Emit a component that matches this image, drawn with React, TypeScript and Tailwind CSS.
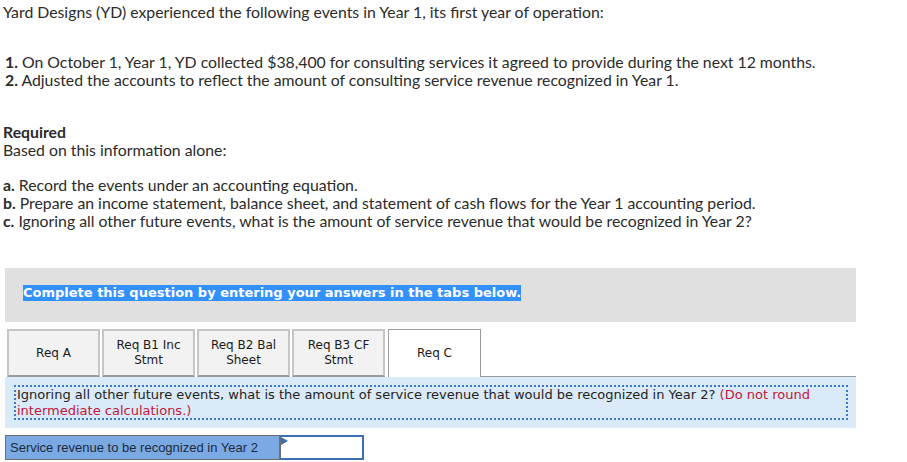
import React from 'react';

const tabs = [
    { label: ['Req A'], active: false },
    { label: ['Req B1 Inc', 'Stmt'], active: false },
    { label: ['Req B2 Bal', 'Sheet'], active: false },
    { label: ['Req B3 CF', 'Stmt'], active: false },
    { label: ['Req C'], active: true },
];

export default function App() {
    return (
        <div className="w-[907px] h-[462px] bg-white overflow-hidden text-[#2b2b2b]">
            <div className="pl-[3px] pt-[3px] font-['Lato',sans-serif] text-[15.8px] leading-[18px]">
                <p>Yard Designs (YD) experienced the following events in Year 1, its first year of operation:</p>
                <div className="mt-[32px] pl-[2px]">
                    <p><b>1.</b> On October 1, Year 1, YD collected $38,400 for consulting services it agreed to provide during the next 12 months.</p>
                    <p><b>2.</b> Adjusted the accounts to reflect the amount of consulting service revenue recognized in Year 1.</p>
                </div>
                <div className="mt-[34px]">
                    <p className="font-bold">Required</p>
                    <p>Based on this information alone:</p>
                </div>
                <div className="mt-[17px]">
                    <p><b>a.</b> Record the events under an accounting equation.</p>
                    <p><b>b.</b> Prepare an income statement, balance sheet, and statement of cash flows for the Year 1 accounting period.</p>
                    <p><b>c.</b> Ignoring all other future events, what is the amount of service revenue that would be recognized in Year 2?</p>
                </div>
            </div>

            <div className="ml-[5px] mt-[38px] w-[851px] h-[54px] bg-[#e0e0e0] pl-[18px] pt-[12px] font-['DejaVu_Sans',Verdana,sans-serif]">
                <span className="bg-[#3391ff] text-white font-bold text-[13px] leading-[16px] inline-block">
                    Complete this question by entering your answers in the tabs below.
                </span>
            </div>

            <div className="ml-[5px] mt-[7px] w-[851px] flex items-end font-['DejaVu_Sans',Verdana,sans-serif] text-[12px] leading-[15px] text-[#1a1a1a]">
                {tabs.map((t, i) => (
                    <div
                        key={i}
                        className={
                            t.active
                                ? 'ml-[3px] w-[93px] h-[48px] bg-white border border-[#9a9a9a] border-b-0 flex flex-col items-center justify-center'
                                : 'ml-[2px] w-[93px] h-[48px] bg-[#f2f2f2] border-2 border-[#c6c6c6] border-b-[#9a9a9a] flex flex-col items-center justify-center'
                        }
                    >
                        {t.label.map((l) => (
                            <span key={l}>{l}</span>
                        ))}
                    </div>
                ))}
                <div className="flex-1 h-[48px] border-b border-[#9a9a9a]" />
            </div>

            <div className="ml-[5px] w-[851px] h-[51px] bg-[#dbeaf8] pl-[9px] pr-[8px] pt-[8px] font-['DejaVu_Sans',Verdana,sans-serif] text-[13px] leading-[16px] text-[#222]">
                <div className="border-2 border-dotted border-[#3b78c6] h-[35px] pl-[1px]">
                    Ignoring all other future events, what is the amount of service revenue that would be recognized in Year 2?{' '}
                    <span className="text-[#c0163c]">(Do not round intermediate calculations.)</span>
                </div>
            </div>

            <div className="ml-[5px] mt-[7px] flex h-[25px] font-['Liberation_Sans',Arial,sans-serif] text-[13px]">
                <div className="w-[275px] bg-[#7aa9e4] border border-[#6e6e6e] flex items-center pl-[4px] text-[#1e2a3a]">
                    Service revenue to be recognized in Year 2
                </div>
                <div className="relative w-[84px] bg-white border-2 border-[#3c6fb4] border-l-[#6e6e6e] border-l">
                    <svg className="absolute left-0 top-0" width="7" height="8" viewBox="0 0 7 8">
                        <polygon points="0,0 7,4 0,8" fill="#3c6fb4" />
                    </svg>
                </div>
            </div>
        </div>
    );
}
